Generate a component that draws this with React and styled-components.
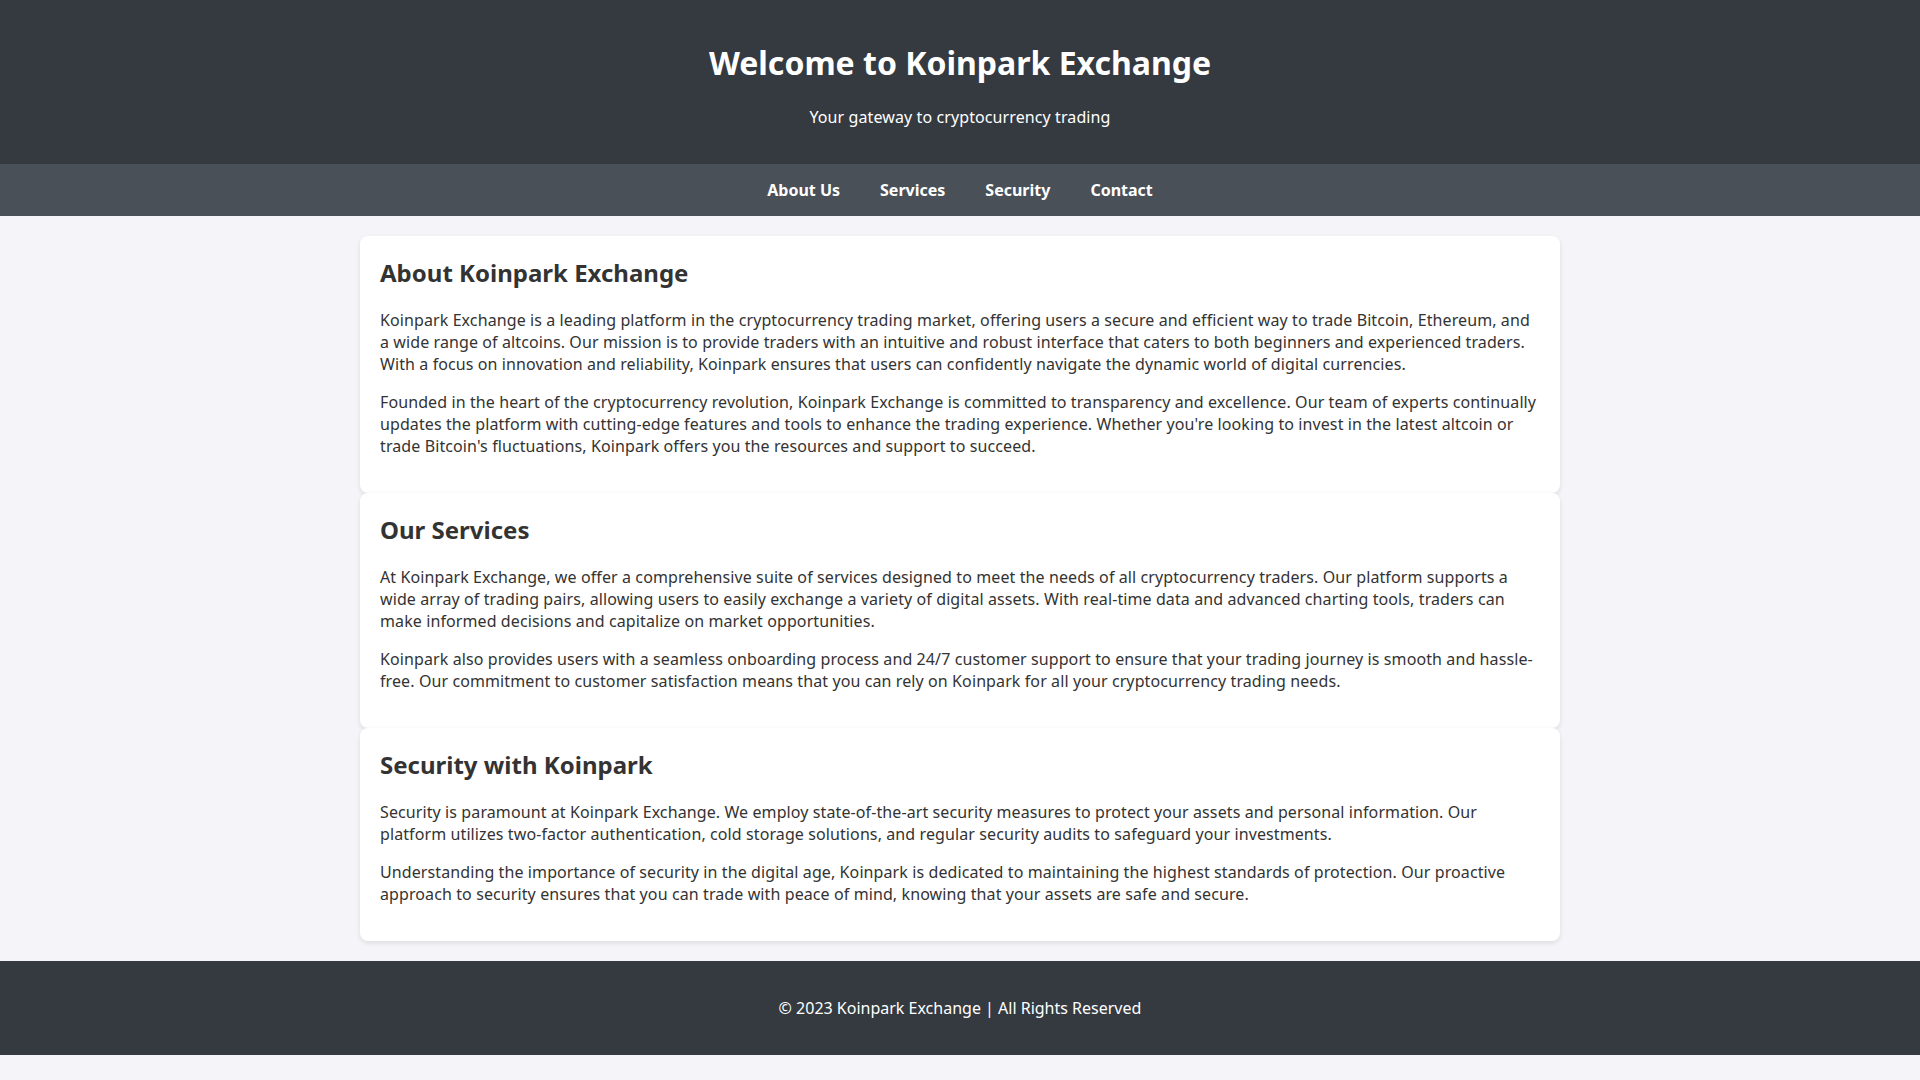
import styled, { createGlobalStyle } from "styled-components";

const GlobalStyle = createGlobalStyle`
  body {
    margin: 0;
    background: #f4f4f9;
    color: #333;
    font-family: "Noto Sans", "DejaVu Sans", sans-serif;
    font-size: 16px;
    line-height: 22px;
  }
`;

const Header = styled.header`
  background: #343a40;
  color: #fff;
  padding: 20px;
  text-align: center;
  h1 {
    font-size: 32px;
    line-height: 44px;
    margin: 21px 0 21px;
  }
  p {
    margin: 16px 0;
    letter-spacing: 0.1px;
  }
`;

const Nav = styled.nav`
  background: #495057;
  padding: 15px 0;
  display: flex;
  justify-content: center;
`;

const NavLink = styled.a`
  color: #fff;
  font-weight: bold;
  text-decoration: none;
  margin: 0 20px;
`;

const Main = styled.main`
  max-width: 1200px;
  margin: 0 auto;
  padding: 20px 0;
`;

const Section = styled.section`
  background: #fff;
  padding: 20px;
  border-radius: 8px;
  box-shadow: 0 2px 5px rgba(0, 0, 0, 0.1);
  h2 {
    font-size: 24px;
    line-height: 33px;
    margin: 0 0 20px;
  }
  p {
    margin: 16px 0;
    letter-spacing: 0.1px;
  }
`;

const Footer = styled.footer`
  background: #343a40;
  color: #fff;
  text-align: center;
  padding: 20px;
  p {
    margin: 16px 0;
  }
`;

const sections = [
  {
    id: "about",
    title: "About Koinpark Exchange",
    paras: [
      "Koinpark Exchange is a leading platform in the cryptocurrency trading market, offering users a secure and efficient way to trade Bitcoin, Ethereum, and a wide range of altcoins. Our mission is to provide traders with an intuitive and robust interface that caters to both beginners and experienced traders. With a focus on innovation and reliability, Koinpark ensures that users can confidently navigate the dynamic world of digital currencies.",
      "Founded in the heart of the cryptocurrency revolution, Koinpark Exchange is committed to transparency and excellence. Our team of experts continually updates the platform with cutting-edge features and tools to enhance the trading experience. Whether you're looking to invest in the latest altcoin or trade Bitcoin's fluctuations, Koinpark offers you the resources and support to succeed.",
    ],
  },
  {
    id: "services",
    title: "Our Services",
    paras: [
      "At Koinpark Exchange, we offer a comprehensive suite of services designed to meet the needs of all cryptocurrency traders. Our platform supports a wide array of trading pairs, allowing users to easily exchange a variety of digital assets. With real-time data and advanced charting tools, traders can make informed decisions and capitalize on market opportunities.",
      "Koinpark also provides users with a seamless onboarding process and 24/7 customer support to ensure that your trading journey is smooth and hassle-free. Our commitment to customer satisfaction means that you can rely on Koinpark for all your cryptocurrency trading needs.",
    ],
  },
  {
    id: "security",
    title: "Security with Koinpark",
    paras: [
      "Security is paramount at Koinpark Exchange. We employ state-of-the-art security measures to protect your assets and personal information. Our platform utilizes two-factor authentication, cold storage solutions, and regular security audits to safeguard your investments.",
      "Understanding the importance of security in the digital age, Koinpark is dedicated to maintaining the highest standards of protection. Our proactive approach to security ensures that you can trade with peace of mind, knowing that your assets are safe and secure.",
    ],
  },
];

function App() {
  return (
    <>
      <GlobalStyle />
      <Header>
        <h1>Welcome to Koinpark Exchange</h1>
        <p>Your gateway to cryptocurrency trading</p>
      </Header>
      <Nav>
        <NavLink href="#about">About Us</NavLink>
        <NavLink href="#services">Services</NavLink>
        <NavLink href="#security">Security</NavLink>
        <NavLink href="#contact">Contact</NavLink>
      </Nav>
      <Main>
        {sections.map((s) => (
          <Section key={s.id} id={s.id}>
            <h2>{s.title}</h2>
            {s.paras.map((p, i) => (
              <p key={i}>{p}</p>
            ))}
          </Section>
        ))}
      </Main>
      <Footer>
        <p>&copy; 2023 Koinpark Exchange | All Rights Reserved</p>
      </Footer>
    </>
  );
}

export default App;
